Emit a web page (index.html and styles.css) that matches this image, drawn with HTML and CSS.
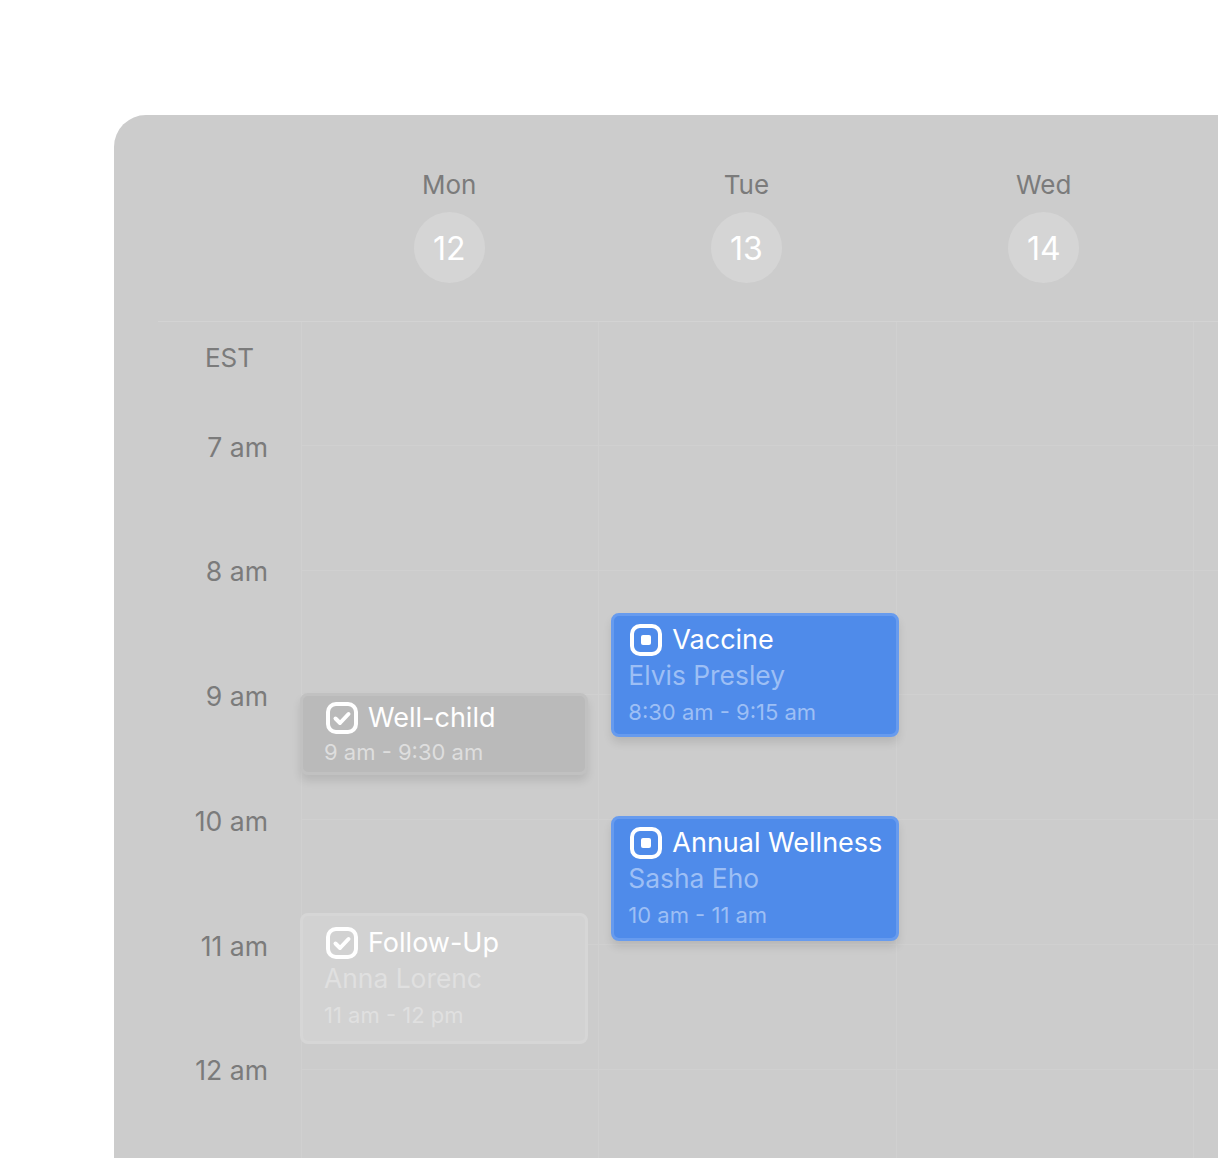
FILE: index.html
```html
<!DOCTYPE html>
<html lang="en">

<head>
    <meta charset="UTF-8">
    <title>Calendar</title>
    <link rel="stylesheet" href="styles.css">
</head>

<body>
    <div class="calendar">
        <div class="day-header">
            <div class="day"><span>Mon</span><div class="date">12</div></div>
            <div class="day"><span>Tue</span><div class="date">13</div></div>
            <div class="day"><span>Wed</span><div class="date">14</div></div>
        </div>
        <div class="grid">
            <div class="times">
                <div class="zone">EST</div>
                <div class="time">7 am</div>
                <div class="time">8 am</div>
                <div class="time">9 am</div>
                <div class="time">10 am</div>
                <div class="time">11 am</div>
                <div class="time">12 am</div>
            </div>
            <div class="column">
                <div class="event event-done well-child">
                    <div class="event-title">
                        <svg class="icon" viewBox="0 0 32 32"><rect x="2" y="2" width="28" height="28" rx="8" /><path d="M9.5 16.5l4.5 4.5 8.5-9" /></svg>
                        Well-child
                    </div>
                    <div class="event-time">9 am - 9:30 am</div>
                </div>
                <div class="event event-past follow-up">
                    <div class="event-title">
                        <svg class="icon" viewBox="0 0 32 32"><rect x="2" y="2" width="28" height="28" rx="8" /><path d="M9.5 16.5l4.5 4.5 8.5-9" /></svg>
                        Follow-Up
                    </div>
                    <div class="event-name">Anna Lorenc</div>
                    <div class="event-time">11 am - 12 pm</div>
                </div>
            </div>
            <div class="column">
                <div class="event event-blue vaccine">
                    <div class="event-title">
                        <svg class="icon" viewBox="0 0 32 32"><rect x="2" y="2" width="28" height="28" rx="8" /><rect class="dot" x="11" y="11" width="10" height="10" rx="2" /></svg>
                        Vaccine
                    </div>
                    <div class="event-name">Elvis Presley</div>
                    <div class="event-time">8:30 am - 9:15 am</div>
                </div>
                <div class="event event-blue wellness">
                    <div class="event-title">
                        <svg class="icon" viewBox="0 0 32 32"><rect x="2" y="2" width="28" height="28" rx="8" /><rect class="dot" x="11" y="11" width="10" height="10" rx="2" /></svg>
                        Annual Wellness
                    </div>
                    <div class="event-name">Sasha Eho</div>
                    <div class="event-time">10 am - 11 am</div>
                </div>
            </div>
            <div class="column"></div>
            <div class="column"></div>
        </div>
    </div>
</body>

</html>
```

FILE: styles.css
```css
html,
body {
    margin: 0;
    height: 100%;
    overflow: hidden;
    background: #fff;
}

body {
    font-family: 'Inter', 'Liberation Sans', sans-serif;
    color: #7b7b7b;
    font-size: 26px;
}

.calendar {
    margin: 115px 0 0 114px;
    height: 1043px;
    background: #ccc;
    border-top-left-radius: 32px;
    padding-left: 44px;
    overflow: hidden;
}

/* Day names and date circles */
.day-header {
    display: flex;
    height: 207px;
    padding-left: 142.5px;
    box-sizing: border-box;
    border-bottom: 1px solid #d3d3d3;
}

.day {
    width: 297.3px;
    flex: none;
    display: flex;
    flex-direction: column;
    align-items: center;
    padding-top: 54px;
    line-height: 32px;
}

.date {
    width: 71px;
    height: 71px;
    margin-top: 11px;
    border-radius: 50%;
    background: #d5d5d5;
    color: #fff;
    font-size: 32px;
    line-height: 73px;
    text-align: center;
}

/* Hour rows */
.grid {
    display: flex;
    height: 836px;
    background: repeating-linear-gradient(to bottom, transparent 0, transparent 122.8px, #d0d0d0 122.8px, #d0d0d0 123.8px, transparent 123.8px, transparent 124.8px);
}

.times {
    width: 143px;
    flex: none;
    text-align: right;
    box-sizing: border-box;
    padding-right: 33px;
    background: #ccc;
}

.zone {
    height: 108.5px;
    padding: 20px 14px 0 0;
    box-sizing: border-box;
    line-height: 32px;
}

.time {
    height: 124.8px;
    font-size: 26.6px;
    line-height: 32px;
}

.column {
    position: relative;
    width: 297.3px;
    flex: none;
    border-left: 1px solid #d0d0d0;
    box-sizing: border-box;
}

/* Events */
.event {
    position: absolute;
    z-index: 1;
    width: 288px;
    box-sizing: border-box;
    border: 3px solid;
    border-radius: 8px;
    padding: 6px 0 0 21px;
}

.event-title {
    display: flex;
    align-items: center;
    gap: 10px;
    height: 32px;
    color: #fff;
    font-size: 27px;
    line-height: 32px;
}

.icon {
    width: 32px;
    height: 32px;
    flex: none;
    margin-left: 2px;
    fill: none;
    stroke: #fff;
    stroke-width: 4;
    stroke-linecap: round;
    stroke-linejoin: round;
}

.icon .dot {
    fill: #fff;
    stroke: none;
}

.event-name {
    margin-top: 2px;
    font-size: 26.4px;
    line-height: 34px;
}

.event-time {
    margin-top: 4px;
    font-size: 22px;
    line-height: 32px;
}

.event-blue {
    background: #4f8bea;
    border-color: #679bee;
    box-shadow: 0 6px 8px rgba(0, 0, 0, 0.1);
    left: 12px;
    height: 124px;
    padding: 8px 0 0 14px;
}

.event-blue .event-name,
.event-blue .event-time {
    color: #9dbff5;
}

.event-done {
    background: #bababa;
    border-color: #c1c1c1;
    box-shadow: 0 6px 8px rgba(0, 0, 0, 0.1);
}

.event-done .event-time {
    margin-top: 2px;
    color: #dedede;
}

.event-past {
    background: #d2d2d2;
    border-color: #d6d6d6;
    padding-top: 11px;
}

.event-past .event-name,
.event-past .event-time {
    color: #e0e0e0;
}

.well-child {
    left: -2px;
    top: 371px;
    height: 82px;
}

.follow-up {
    left: -2px;
    top: 591px;
    height: 131px;
}

.vaccine {
    top: 291px;
}

.wellness {
    top: 494px;
    height: 125px;
}
```
